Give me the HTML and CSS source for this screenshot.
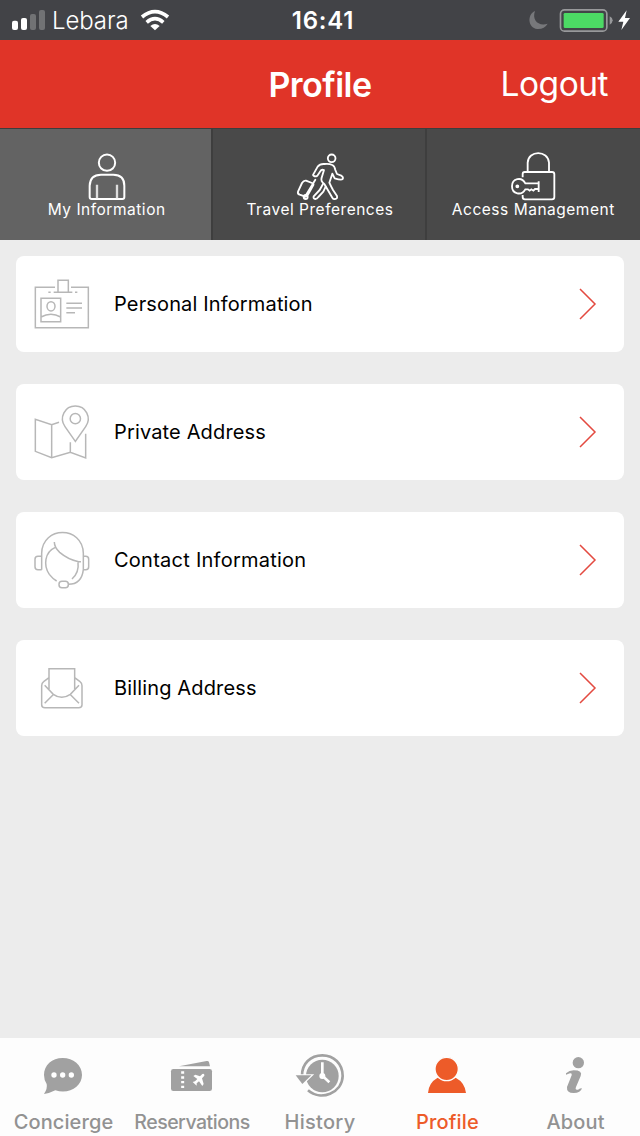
FILE: index.html
```html
<!DOCTYPE html>
<html lang="en">
<head>
<meta charset="utf-8">
<title>Profile</title>
<link rel="stylesheet" href="styles.css">
</head>
<body>
<div class="screen">
  <div class="status">
    <div class="status-left">
      <svg class="signal" width="33" height="20" viewBox="36 30 99 60"><rect x="36" y="62" width="18" height="28" rx="6" fill="#fff"/><rect x="63" y="54" width="18" height="36" rx="6" fill="#fff"/><rect x="90" y="42" width="18" height="48" rx="6" fill="#717274"/><rect x="117" y="30" width="18" height="60" rx="6" fill="#717274"/></svg>
      <span class="carrier">Lebara</span>
      <svg class="wifi" width="28" height="20" viewBox="423 30 84 60" fill="none" stroke="#fff" stroke-width="11"><path d="M426 51Q465 19 504 51"/><path d="M440 67Q465 45 490 67"/><path d="M451 78Q465 66 479 78L465 91Z" fill="#fff" stroke="none"/></svg>
    </div>
    <span class="clock">16:41</span>
    <svg class="power" width="102" height="26" viewBox="88 21 306 78"><path d="M106 33C82 43 84 84 113 87Q134 88 144 71C116 80 96 60 106 33Z" fill="#77787b"/><rect x="182.500" y="29.500" width="139" height="64" rx="12" fill="none" stroke="#98999b" stroke-width="5"/><rect x="192" y="39" width="120" height="45" rx="4" fill="#4cd964"/><path d="M330 49Q339 54 339 61Q339 69 330 74Z" fill="#98999b"/><path d="M381 31L356 65H371L365 90L391 54H376Z" fill="#fff"/></svg>
  </div>
  <header class="navbar">
    <h1 class="title">Profile</h1>
    <a class="logout">Logout</a>
  </header>
  <nav class="tabs">
    <a class="tab active">
      <svg width="50" height="50" viewBox="246 92 150 150" fill="none" stroke="#fff" stroke-width="6"><circle cx="321" cy="127" r="24.500"/><path d="M269 230V196Q270 163 303 163H340Q373 163 373 196V230Q373 236 367 236H275Q269 236 269 230Z"/><path d="M291 193V234M351 193V234" stroke="#ddd" stroke-width="7"/></svg>
      <span class="tab-label">My Information</span>
    </a>
    <a class="tab">
      <svg width="50" height="50" viewBox="255 92 150 150" fill="none" stroke="#fff" stroke-width="5.500" stroke-linejoin="round" stroke-linecap="round"><circle cx="365" cy="114" r="11.500"/><path d="M310 162L323 139Q330 130 343 131Q357 129 367 134Q374 137 376 149L381 161L394 166Q402 171 397 177Q393 180 374 174L367 160L358 187Q363 198 369 209L381 227Q383 236 375 236Q370 237 367 232L343 191Q331 183 335 172L342 149Q334 146 331 153L322 166Q316 170 311 166Q308 164 310 162Z"/><path d="M339 191L329 209L311 228Q309 235 316 236Q321 236 325 230L340 214L347 199"/><path d="M316 178L284 231M306 188L288 181Q281 180 276 188L264 214Q262 220 269 223L286 229Q291 229 295 221L310 194Q312 190 306 188"/><circle cx="287" cy="230" r="6"/></svg>
      <span class="tab-label">Travel Preferences</span>
    </a>
    <a class="tab">
      <svg width="50" height="50" viewBox="265 92 150 150" fill="none" stroke="#fff" stroke-width="5.500"><path d="M324 154V127C326 89 385 89 388 127V154"/><path d="M309 171V161Q309 155 315 155H397Q404 155 404 162V230Q404 237 397 237H316Q309 237 309 230V224"/><path d="M357 183V215M357 189H317C306 168 277 174 277 198C277 222 306 227 317 207H325L330 211L335 207L341 211L346 206H357"/><circle cx="293" cy="198" r="3"/></svg>
      <span class="tab-label">Access Management</span>
    </a>
  </nav>
  <main class="list">
    <a class="card">
      <svg class="card-icon" viewBox="70 78 168 168"><path d="M136 112H77V233H236V112H184M145 127V91H176V127M132 127H188M116 127H123M196 127H203M94 145H153V215H94ZM94 201Q124 185 153 201M170 160H217M170 174H217M170 188H196"/><ellipse cx="124" cy="169" rx="12" ry="14"/></svg>
      <span class="card-label">Personal Information</span>
      <svg class="chevron" width="20" height="32" viewBox="0 0 20 32"><path d="M2 1L17 16L2 31"/></svg>
    </a>
    <a class="card">
      <svg class="card-icon" viewBox="70 72 168 168"><path d="M148 127L126 134L77 118V214L126 233L182 217L228 234V161M126 134V233M182 187V217M197 184L166 140C147 112 166 78 197 78C228 78 247 112 228 140Z"/><circle cx="197" cy="116" r="15.500"/></svg>
      <span class="card-label">Private Address</span>
      <svg class="chevron" width="20" height="32" viewBox="0 0 20 32"><path d="M2 1L17 16L2 31"/></svg>
    </a>
    <a class="card">
      <svg class="card-icon" viewBox="70 66 168 168"><path d="M96 179V130C98 47 219 47 221 130V179C218 206 203 223 176 223M96 139H85Q76 139 76 148V170Q76 179 85 179H96M221 139H228Q237 139 237 148V170Q237 179 228 179H221M134 96Q134 112 150 127Q176 149 207 155H214M137 112C104 126 101 168 119 193Q129 206 141 213M205 157Q209 187 187 207"/><rect x="148" y="214" width="28" height="19" rx="9"/></svg>
      <span class="card-label contact">Contact Information</span>
      <svg class="chevron" width="20" height="32" viewBox="0 0 20 32"><path d="M2 1L17 16L2 31"/></svg>
    </a>
    <a class="card">
      <svg class="card-icon" viewBox="70 60 168 168"><path d="M118 147V86H195V147M118 113L102 125Q96 129 96 137V194Q96 203 106 203H207Q217 203 217 194V137Q217 129 211 125L195 113M105 136L131 163Q156 181 182 163L208 136M132 163L105 190M181 163L208 190"/></svg>
      <span class="card-label">Billing Address</span>
      <svg class="chevron" width="20" height="32" viewBox="0 0 20 32"><path d="M2 1L17 16L2 31"/></svg>
    </a>
  </main>
  <nav class="bottom">
    <a class="item">
      <svg width="50" height="50" viewBox="117 63 150 150"><path d="M188 84C156 84 132 106 132 135Q132 150 140 162Q143 176 132 192Q151 189 166 181C208 194 246 169 246 135C246 106 220 84 188 84Z" fill="#a1a1a1"/><g fill="#fff"><circle cx="162" cy="135" r="8"/><circle cx="188" cy="135" r="8"/><circle cx="214" cy="135" r="8"/></g></svg>
      <span class="item-label concierge">Concierge</span>
    </a>
    <a class="item">
      <svg width="50" height="50" viewBox="501 63 150 150"><path d="M537 109L620 93Q626 92 627 97L630 109Z" fill="#a1a1a1"/><rect x="513" y="117" width="123" height="66" rx="7" fill="#a1a1a1"/><path d="M548 124V131M548 139V146M548 153V160M548 167V174" stroke="#fff" stroke-width="9"/><path d="M580 138L586 134L600 139L607 132Q614 130 613 137L606 145L611 162L607 168L597 154L590 160V167L578 156L585 154L592 147Z" fill="#fff"/></svg>
      <span class="item-label reservations">Reservations</span>
    </a>
    <a class="item">
      <svg width="50" height="50" viewBox="105 63 150 150"><circle cx="187" cy="138" r="49" fill="#a1a1a1"/><path d="M144 181C183 215 247 188 248 138C248 101 221 76 187 76C151 76 126 101 126 137" fill="none" stroke="#a1a1a1" stroke-width="8"/><path d="M107 136H154L127 162Z" fill="#a1a1a1" stroke="#fdfdfd" stroke-width="7" paint-order="stroke"/><path d="M187 97V137L208 157" fill="none" stroke="#fff" stroke-width="8"/><circle cx="187" cy="138" r="9" fill="#fff"/></svg>
      <span class="item-label">History</span>
    </a>
    <a class="item current">
      <svg width="50" height="50" viewBox="489 63 150 150" fill="#ed5b29"><path d="M504 189Q506 158 533 143Q560 162 587 143Q615 158 618 189Z"/><circle cx="560" cy="117" r="35" stroke="#fdfdfd" stroke-width="4"/></svg>
      <span class="item-label about">Profile</span>
    </a>
    <a class="item">
      <svg width="50" height="50" viewBox="873 63 150 150" fill="#a1a1a1"><circle cx="955" cy="98" r="17"/><path d="M918 130Q928 121 941 121Q969 121 962 138L948 171Q944 181 954 179Q960 175 966 175Q962 189 941 189Q919 189 921 171L935 136Q937 129 930 130Q924 133 918 134Z"/></svg>
      <span class="item-label about">About</span>
    </a>
  </nav>
</div>
</body>
</html>
```

FILE: styles.css
```css
* { box-sizing: border-box; }
body { margin: 0; font-family: Inter, "Liberation Sans", sans-serif; }
svg { display: block; flex: none; overflow: visible; }
span, a, h1 { white-space: nowrap; }

.screen { width: 640px; height: 1136px; display: flex; flex-direction: column; background: #ececec; }

.status { height: 40px; display: grid; grid-template-columns: 1fr auto 1fr; align-items: center; padding: 0 9px 0 12px; background: #424347; color: #fff; }
.status-left { display: flex; align-items: center; }
.carrier { margin-left: 7px; width: 77px; font-size: 24px; font-weight: 300; letter-spacing: -0.1px; }
.wifi { margin-left: 12px; }
.clock { padding-left: 3px; font-size: 24px; font-weight: 600; letter-spacing: 0.8px; }
.power { justify-self: end; }

.navbar { height: 88px; display: grid; grid-template-columns: 1fr auto 1fr; align-items: center; padding: 0 32px; background: #e03428; color: #fff; }
.title { grid-column: 2; margin: 0; font-size: 34px; font-weight: 600; letter-spacing: -0.5px; }
.logout { justify-self: end; font-size: 33.5px; letter-spacing: -0.5px; }

.tabs { height: 112px; display: grid; grid-template-columns: repeat(3, 1fr); background: #494949; border-top: 1px solid #3d3d3d; }
.tab { display: flex; flex-direction: column; align-items: center; padding-top: 22px; box-shadow: inset -2px 0 #3e3e3e; color: #fff; }
.tab:last-child { box-shadow: none; }
.tab.active { background: #636363; }
.tab-label { font-size: 15.5px; line-height: 17px; letter-spacing: 0.52px; }

.list { flex: 1; display: flex; flex-direction: column; gap: 32px; padding: 16px; }
.card { height: 96px; display: flex; align-items: center; padding: 0 26px 0 17px; border-radius: 8px; background: #fff; color: #000; }
.card-icon { width: 56px; height: 56px; fill: none; stroke: #b7b7b7; stroke-width: 4.5; }
.card-label { margin-left: 25px; flex: 1; font-size: 20px; letter-spacing: 0.15px; }
.card-label.contact { letter-spacing: 0.25px; }
.chevron { fill: none; stroke: #e34a40; stroke-width: 1.5; }

.bottom { height: 98px; display: grid; grid-template-columns: repeat(5, 1fr); background: #fdfdfd; }
.item { display: flex; flex-direction: column; align-items: center; padding-top: 13px; color: #929292; }
.item-label { margin-top: 9px; font-size: 20px; font-weight: 500; line-height: 24px; letter-spacing: 0.3px; }
.concierge { padding-right: 1px; letter-spacing: 0.1px; }
.reservations { font-size: 19.5px; letter-spacing: -0.5px; }
.about { padding-right: 1px; letter-spacing: 0.15px; }
.current { color: #ed5b29; }
```
